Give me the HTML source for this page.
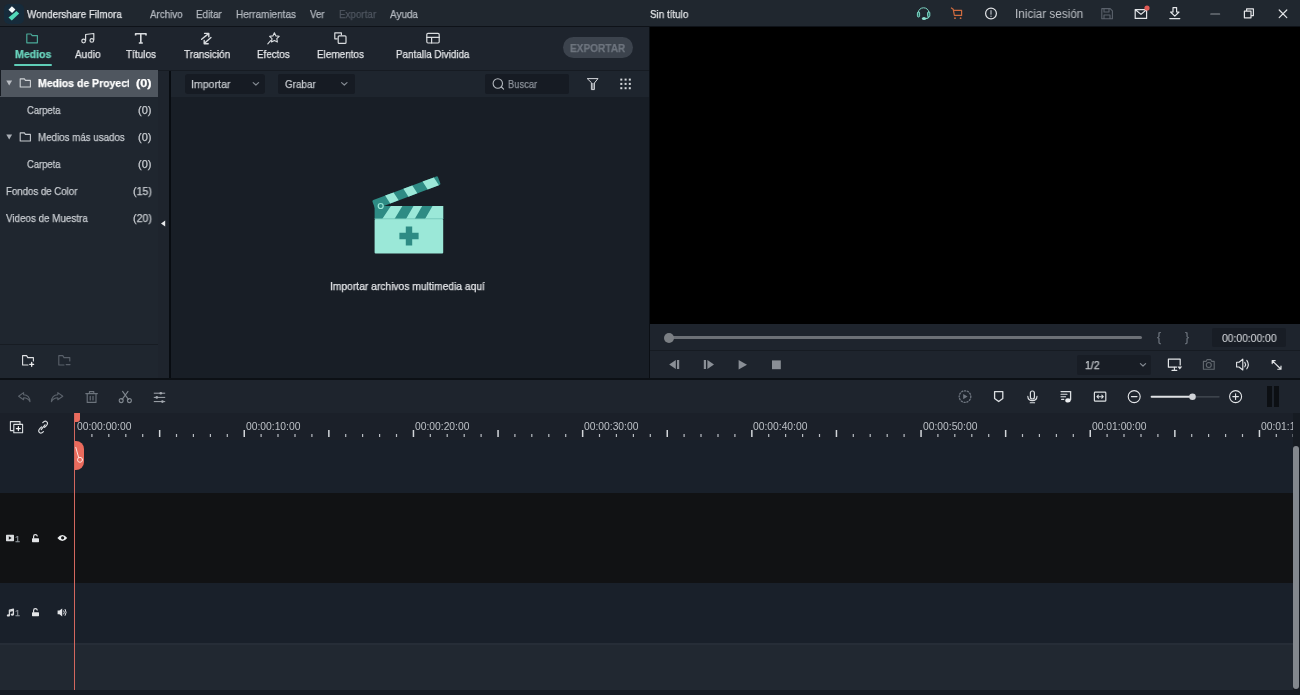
<!DOCTYPE html>
<html lang="es">
<head>
<meta charset="utf-8">
<title>Wondershare Filmora</title>
<style>
*{box-sizing:border-box;margin:0;padding:0}
html,body{width:1300px;height:695px;overflow:hidden;background:#1e242d}
body{position:relative;font-family:"Liberation Sans",sans-serif;font-size:11px;color:#d6d9dd;}
.a{position:absolute}
.t{position:absolute;white-space:nowrap;will-change:transform;-webkit-text-stroke:0.25px currentColor;line-height:14px;height:14px;margin-top:-7px}
svg{position:absolute;overflow:visible}
.rl{color:#bcc0c6;-webkit-text-stroke:0;font-size:10.3px}
.ic{fill:none;stroke:#d9dcdf;stroke-width:1.2;stroke-linecap:round;stroke-linejoin:round}
</style>
<style id="fit">
.t{transform-origin:0 50%}
#t-app{left:27.3px!important;transform:scaleX(0.898)}
#m1{left:149.5px!important;transform:scaleX(0.892)}
#m2{left:196.0px!important;transform:scaleX(0.897)}
#m3{left:236.0px!important;transform:scaleX(0.909)}
#m4{left:310.0px!important;transform:scaleX(0.882)}
#m5{left:338.5px!important;transform:scaleX(0.893)}
#m6{left:390.0px!important;transform:scaleX(0.903)}
#t-doc{left:650.0px!important;transform:scaleX(0.895)}
#tb1{left:14.5px!important;transform:scaleX(0.961)}
#tb2{left:74.5px!important;transform:scaleX(0.911)}
#tb3{left:126.0px!important;transform:scaleX(0.909)}
#tb4{left:183.5px!important;transform:scaleX(0.920)}
#tb5{left:257.0px!important;transform:scaleX(0.892)}
#tb6{left:317.0px!important;transform:scaleX(0.904)}
#tb7{left:395.5px!important;transform:scaleX(0.896)}
#s1n{left:136.0px!important;transform:scaleX(1.154)}
#s2{left:27.0px!important;transform:scaleX(0.855)}
#s2n{left:138.0px!important;transform:scaleX(1.000)}
#s3{left:38.3px!important;transform:scaleX(0.887)}
#s3n{left:138.0px!important;transform:scaleX(1.000)}
#s4{left:27.0px!important;transform:scaleX(0.855)}
#s4n{left:138.0px!important;transform:scaleX(1.000)}
#s5{left:6.0px!important;transform:scaleX(0.878)}
#s5n{left:132.7px!important;transform:scaleX(0.963)}
#s6{left:6.0px!important;transform:scaleX(0.893)}
#s6n{left:132.7px!important;transform:scaleX(0.963)}
#d1{left:191.0px!important;transform:scaleX(0.963)}
#d2{left:285.0px!important;transform:scaleX(0.897)}
#d3{left:508.0px!important;transform:scaleX(0.853)}
#t-imp{left:330.1px!important;transform:scaleX(0.935)}
#tc{left:1221.8px!important;transform:scaleX(0.940)}
#half{left:1084.7px!important;transform:scaleX(0.953)}
</style>
</head>
<body>
<!-- ===== base panels ===== -->
<div class="a" style="left:0;top:0;width:1300px;height:26px;background:#20272f"></div>
<div class="a" style="left:0;top:25.8px;width:1300px;height:1.6px;background:#0e1218"></div>
<div class="a" style="left:0;top:28px;width:650px;height:42px;background:#1e242d"></div>
<div class="a" style="left:0;top:70px;width:650px;height:1px;background:#161b22"></div>
<!-- sidebar -->
<div class="a" style="left:0;top:71px;width:158px;height:307px;background:#1f262f"></div>
<div class="a" style="left:158px;top:71px;width:11px;height:307px;background:#1e242d"></div>
<div class="a" style="left:169px;top:71px;width:2px;height:307px;background:#080c11"></div>
<!-- media panel -->
<div class="a" style="left:171px;top:71px;width:478px;height:26px;background:#1e252e"></div>
<div class="a" style="left:171px;top:97px;width:478px;height:281px;background:#181e26"></div>
<div class="a" style="left:649px;top:27px;width:1px;height:351px;background:#0b0f14"></div>
<!-- preview -->
<div class="a" style="left:649.6px;top:26.6px;width:650.4px;height:297px;background:#000"></div>
<div class="a" style="left:650px;top:324px;width:650px;height:54px;background:#1e242d"></div>
<div class="a" style="left:650px;top:350px;width:650px;height:1px;background:#161b22"></div>
<!-- split line -->
<div class="a" style="left:0;top:378px;width:1300px;height:2px;background:#0c1015"></div>
<!-- timeline -->
<div class="a" style="left:0;top:380px;width:1300px;height:33px;background:#1e242d"></div>
<div class="a" style="left:0;top:413px;width:1300px;height:27px;background:#1b2029"></div>
<div class="a" style="left:0;top:440px;width:1300px;height:53px;background:#19202a"></div>
<div class="a" style="left:0;top:493px;width:1300px;height:90px;background:#111214"></div>
<div class="a" style="left:0;top:583px;width:1300px;height:60px;background:#19202a"></div>
<div class="a" style="left:0;top:643px;width:1300px;height:47px;background:#212831"></div>
<div class="a" style="left:0;top:643px;width:1293px;height:2px;background:#262d37"></div>
<div class="a" style="left:0;top:690px;width:1300px;height:5px;background:#161b23"></div>

<!-- ===== title bar ===== -->
<div id="sec-title">
<div class="a" style="left:4px;top:3.5px;width:20px;height:20px;border-radius:5px;background:#162b3b"></div>
<svg style="left:0;top:0" width="28" height="28" viewBox="0 0 28 28"><path d="M11.9 6.3 L15.4 9.5 L12.1 13.1 L8.5 9.7 Z" fill="#f6fbfb"/><path d="M16.5 10.9 L19.2 13.6 L11.8 20.6 L8.5 17.5 Z" fill="#52d8b8"/></svg>
<span class="t" id="t-app" style="left:27px;top:13.5px;color:#e4e6e9">Wondershare Filmora</span>
<span class="t" id="m1" style="left:149px;top:13.5px;color:#b4b9c0">Archivo</span>
<span class="t" id="m2" style="left:196px;top:13.5px;color:#b4b9c0">Editar</span>
<span class="t" id="m3" style="left:236px;top:13.5px;color:#b4b9c0">Herramientas</span>
<span class="t" id="m4" style="left:310px;top:13.5px;color:#b4b9c0">Ver</span>
<span class="t" id="m5" style="left:338px;top:13.5px;color:#4f5660">Exportar</span>
<span class="t" id="m6" style="left:390px;top:13.5px;color:#b4b9c0">Ayuda</span>
<span class="t" id="t-doc" style="left:650px;top:13.5px;color:#e4e6e9">Sin título</span>
<span class="t" id="t-login" style="left:1015.2px;top:13.8px;color:#bcc0c6;font-size:12px;-webkit-text-stroke:0;transform:scaleX(.975)">Iniciar sesión</span>
</div>

<!-- ===== tabs ===== -->
<div id="sec-tabs">
<span class="t" id="tb1" style="left:14px;top:54px;color:#69d3bd;font-weight:bold">Medios</span>
<div class="a" style="left:14px;top:64px;width:38px;height:2px;background:#5fcdb8;border-radius:1px"></div>
<span class="t" id="tb2" style="left:74px;top:54px;color:#e4e6e9">Audio</span>
<span class="t" id="tb3" style="left:126px;top:54px;color:#e4e6e9">Títulos</span>
<span class="t" id="tb4" style="left:183px;top:54px;color:#e4e6e9">Transición</span>
<span class="t" id="tb5" style="left:257px;top:54px;color:#e4e6e9">Efectos</span>
<span class="t" id="tb6" style="left:317px;top:54px;color:#e4e6e9">Elementos</span>
<span class="t" id="tb7" style="left:395px;top:54px;color:#e4e6e9">Pantalla Dividida</span>
<div class="a" style="left:563px;top:37px;width:70px;height:21px;border-radius:11px;background:#3c434d"></div>
<span class="t" id="t-exp" style="left:570.4px;top:47.5px;color:#6d747e;font-weight:bold;font-size:11px;transform:scaleX(.917)">EXPORTAR</span>
</div>

<!-- ===== sidebar ===== -->
<div id="sec-side">
<div class="a" style="left:0;top:70px;width:158px;height:26.5px;background:#4f565f"></div><div class="a" style="left:0;top:70px;width:1px;height:26px;background:#161b22"></div>
<div class="a" style="left:38px;top:75px;width:91px;height:16px;overflow:hidden"><span class="t" id="s1" style="left:0;top:8px;color:#fff;font-weight:bold;transform:scaleX(.951)">Medios de Proyecto</span></div>
<span class="t" id="s1n" style="left:135px;top:83px;color:#fff;font-weight:bold">(0)</span>
<span class="t" id="s2" style="left:27px;top:110px;color:#c9cdd2">Carpeta</span>
<span class="t" id="s2n" style="left:138px;top:110px;color:#c9cdd2">(0)</span>
<span class="t" id="s3" style="left:38px;top:137px;color:#c9cdd2">Medios más usados</span>
<span class="t" id="s3n" style="left:138px;top:137px;color:#c9cdd2">(0)</span>
<span class="t" id="s4" style="left:27px;top:164px;color:#c9cdd2">Carpeta</span>
<span class="t" id="s4n" style="left:138px;top:164px;color:#c9cdd2">(0)</span>
<span class="t" id="s5" style="left:6px;top:191px;color:#c9cdd2">Fondos de Color</span>
<span class="t" id="s5n" style="left:132px;top:191px;color:#c9cdd2">(15)</span>
<span class="t" id="s6" style="left:6px;top:218px;color:#c9cdd2">Videos de Muestra</span>
<span class="t" id="s6n" style="left:132px;top:218px;color:#c9cdd2">(20)</span>
<div class="a" style="left:0;top:344px;width:158px;height:1px;background:#171c23"></div>
</div>

<!-- ===== media toolbar ===== -->
<div id="sec-media">
<div class="a" style="left:185px;top:74px;width:80px;height:20px;background:#161b23;border-radius:3px"></div>
<span class="t" id="d1" style="left:191px;top:84px;color:#c3c7cc">Importar</span>
<div class="a" style="left:278px;top:74px;width:77px;height:20px;background:#161b23;border-radius:2px"></div>
<span class="t" id="d2" style="left:285px;top:84px;color:#c3c7cc">Grabar</span>
<div class="a" style="left:485px;top:74px;width:84px;height:20px;background:#161b23;border-radius:2px"></div>
<span class="t" id="d3" style="left:508px;top:84px;color:#8b9199">Buscar</span>
<span class="t" id="t-imp" style="left:331px;top:286px;color:#e4e6e9">Importar archivos multimedia aquí</span>
</div>

<!-- ===== preview controls ===== -->
<div id="sec-prev">
<div class="a" style="left:669px;top:336px;width:473px;height:3px;background:#6c7076;border-radius:1.5px"></div>
<div class="a" style="left:664px;top:333px;width:10px;height:10px;background:#7b7f84;border-radius:5px"></div>
<span class="t" id="br1" style="left:1157px;top:337px;color:#6b727b;font-size:12px">{</span>
<span class="t" id="br2" style="left:1185.3px;top:337px;color:#6b727b;font-size:12px">}</span>
<div class="a" style="left:1212px;top:328px;width:74px;height:19px;background:#181d25;border-radius:2px"></div>
<span class="t" id="tc" style="left:1221px;top:338px;color:#d3d6da;-webkit-text-stroke:0.1px">00:00:00:00</span>
<div class="a" style="left:1077px;top:355px;width:74px;height:20px;background:#181d25;border-radius:2px"></div>
<span class="t" id="half" style="left:1085px;top:365px;color:#c3c7cc">1/2</span>
</div>

<!-- ===== timeline ===== -->
<div id="sec-tl">
<div id="ruler" class="a" style="left:0;top:0;width:1293px;height:445px;overflow:hidden"><svg style="left:0;top:413px" width="1293" height="27" viewBox="0 0 1293 27"><rect x="91.3" y="21" width="1.2" height="3" fill="#b9bdc3"/><rect x="108.2" y="21" width="1.2" height="3" fill="#b9bdc3"/><rect x="125.2" y="21" width="1.2" height="3" fill="#b9bdc3"/><rect x="142.1" y="21" width="1.2" height="3" fill="#b9bdc3"/><rect x="158.9" y="17" width="1.5" height="7" fill="#d3d6da"/><rect x="175.9" y="21" width="1.2" height="3" fill="#b9bdc3"/><rect x="192.8" y="21" width="1.2" height="3" fill="#b9bdc3"/><rect x="209.8" y="21" width="1.2" height="3" fill="#b9bdc3"/><rect x="226.7" y="21" width="1.2" height="3" fill="#b9bdc3"/><rect x="243.5" y="17" width="1.5" height="7" fill="#d3d6da"/><rect x="260.5" y="21" width="1.2" height="3" fill="#b9bdc3"/><rect x="277.4" y="21" width="1.2" height="3" fill="#b9bdc3"/><rect x="294.4" y="21" width="1.2" height="3" fill="#b9bdc3"/><rect x="311.3" y="21" width="1.2" height="3" fill="#b9bdc3"/><rect x="328.1" y="17" width="1.5" height="7" fill="#d3d6da"/><rect x="345.1" y="21" width="1.2" height="3" fill="#b9bdc3"/><rect x="362.0" y="21" width="1.2" height="3" fill="#b9bdc3"/><rect x="379.0" y="21" width="1.2" height="3" fill="#b9bdc3"/><rect x="395.9" y="21" width="1.2" height="3" fill="#b9bdc3"/><rect x="412.7" y="17" width="1.5" height="7" fill="#d3d6da"/><rect x="429.7" y="21" width="1.2" height="3" fill="#b9bdc3"/><rect x="446.6" y="21" width="1.2" height="3" fill="#b9bdc3"/><rect x="463.6" y="21" width="1.2" height="3" fill="#b9bdc3"/><rect x="480.5" y="21" width="1.2" height="3" fill="#b9bdc3"/><rect x="497.3" y="17" width="1.5" height="7" fill="#d3d6da"/><rect x="514.3" y="21" width="1.2" height="3" fill="#b9bdc3"/><rect x="531.2" y="21" width="1.2" height="3" fill="#b9bdc3"/><rect x="548.2" y="21" width="1.2" height="3" fill="#b9bdc3"/><rect x="565.1" y="21" width="1.2" height="3" fill="#b9bdc3"/><rect x="581.9" y="17" width="1.5" height="7" fill="#d3d6da"/><rect x="598.9" y="21" width="1.2" height="3" fill="#b9bdc3"/><rect x="615.8" y="21" width="1.2" height="3" fill="#b9bdc3"/><rect x="632.8" y="21" width="1.2" height="3" fill="#b9bdc3"/><rect x="649.7" y="21" width="1.2" height="3" fill="#b9bdc3"/><rect x="666.5" y="17" width="1.5" height="7" fill="#d3d6da"/><rect x="683.5" y="21" width="1.2" height="3" fill="#b9bdc3"/><rect x="700.4" y="21" width="1.2" height="3" fill="#b9bdc3"/><rect x="717.4" y="21" width="1.2" height="3" fill="#b9bdc3"/><rect x="734.3" y="21" width="1.2" height="3" fill="#b9bdc3"/><rect x="751.1" y="17" width="1.5" height="7" fill="#d3d6da"/><rect x="768.1" y="21" width="1.2" height="3" fill="#b9bdc3"/><rect x="785.0" y="21" width="1.2" height="3" fill="#b9bdc3"/><rect x="802.0" y="21" width="1.2" height="3" fill="#b9bdc3"/><rect x="818.9" y="21" width="1.2" height="3" fill="#b9bdc3"/><rect x="835.7" y="17" width="1.5" height="7" fill="#d3d6da"/><rect x="852.7" y="21" width="1.2" height="3" fill="#b9bdc3"/><rect x="869.6" y="21" width="1.2" height="3" fill="#b9bdc3"/><rect x="886.6" y="21" width="1.2" height="3" fill="#b9bdc3"/><rect x="903.5" y="21" width="1.2" height="3" fill="#b9bdc3"/><rect x="920.3" y="17" width="1.5" height="7" fill="#d3d6da"/><rect x="937.3" y="21" width="1.2" height="3" fill="#b9bdc3"/><rect x="954.2" y="21" width="1.2" height="3" fill="#b9bdc3"/><rect x="971.2" y="21" width="1.2" height="3" fill="#b9bdc3"/><rect x="988.1" y="21" width="1.2" height="3" fill="#b9bdc3"/><rect x="1004.9" y="17" width="1.5" height="7" fill="#d3d6da"/><rect x="1021.9" y="21" width="1.2" height="3" fill="#b9bdc3"/><rect x="1038.8" y="21" width="1.2" height="3" fill="#b9bdc3"/><rect x="1055.8" y="21" width="1.2" height="3" fill="#b9bdc3"/><rect x="1072.7" y="21" width="1.2" height="3" fill="#b9bdc3"/><rect x="1089.5" y="17" width="1.5" height="7" fill="#d3d6da"/><rect x="1106.5" y="21" width="1.2" height="3" fill="#b9bdc3"/><rect x="1123.4" y="21" width="1.2" height="3" fill="#b9bdc3"/><rect x="1140.4" y="21" width="1.2" height="3" fill="#b9bdc3"/><rect x="1157.3" y="21" width="1.2" height="3" fill="#b9bdc3"/><rect x="1174.1" y="17" width="1.5" height="7" fill="#d3d6da"/><rect x="1191.1" y="21" width="1.2" height="3" fill="#b9bdc3"/><rect x="1208.0" y="21" width="1.2" height="3" fill="#b9bdc3"/><rect x="1225.0" y="21" width="1.2" height="3" fill="#b9bdc3"/><rect x="1241.9" y="21" width="1.2" height="3" fill="#b9bdc3"/><rect x="1258.7" y="17" width="1.5" height="7" fill="#d3d6da"/><rect x="1275.7" y="21" width="1.2" height="3" fill="#b9bdc3"/><rect x="1292.6" y="21" width="1.2" height="3" fill="#b9bdc3"/></svg><span class="t rl" style="left:76.5px;top:426.5px">00:00:00:00</span><span class="t rl" style="left:245.7px;top:426.5px">00:00:10:00</span><span class="t rl" style="left:414.9px;top:426.5px">00:00:20:00</span><span class="t rl" style="left:584.1px;top:426.5px">00:00:30:00</span><span class="t rl" style="left:753.3px;top:426.5px">00:00:40:00</span><span class="t rl" style="left:922.5px;top:426.5px">00:00:50:00</span><span class="t rl" style="left:1091.7px;top:426.5px">00:01:00:00</span><span class="t rl" style="left:1260.9px;top:426.5px">00:01:10:00</span></div>
<div class="a" style="left:1293px;top:413px;width:7px;height:282px;background:#161b22"></div>
<div class="a" style="left:1293px;top:446px;width:5.5px;height:243px;background:#83888e;border-radius:3px"></div>
<div class="a" style="left:74px;top:413px;width:6px;height:9px;background:#ea6b5d;border-radius:0 0 3px 0"></div>
<div class="a" style="left:74px;top:441px;width:10px;height:29px;background:#ea6b5d;border-radius:0 8px 8px 0"></div>
<div class="a" style="left:73.8px;top:413px;width:1.3px;height:277px;background:#d2675e"></div>
<div class="a" style="left:1267px;top:386px;width:5px;height:21px;background:#0c0f13"></div>
<div class="a" style="left:1274px;top:386px;width:5px;height:21px;background:#0c0f13"></div>
<span class="t" id="v1" style="left:15px;top:538.5px;color:#8e949b;font-size:9px">1</span>
<span class="t" id="a1" style="left:15px;top:612.5px;color:#8e949b;font-size:9px">1</span>
</div>

<!--ICONS-->
<svg id="icons" style="left:0;top:0" width="1300" height="695" viewBox="0 0 1300 695">
<!-- title bar icons -->
<g id="i-title" fill="none" stroke-linecap="round" stroke-linejoin="round">
<path d="M918.4 12 A5.2 4.2 0 0 1 928.8 12" stroke="#7fd8c6" stroke-width="1"/>
<rect x="917.4" y="11.8" width="2.2" height="5.2" rx="1.1" stroke="#7fd8c6" stroke-width="1" fill="#2a6e66"/><rect x="927.6" y="11.8" width="2.2" height="5.2" rx="1.1" stroke="#7fd8c6" stroke-width="1" fill="#2a6e66"/>
<path d="M928.6 17.2 Q928 18.6 925.6 18.6" stroke="#7fd8c6" stroke-width="1.1"/><ellipse cx="924" cy="18.5" rx="2.1" ry="1.5" fill="#8ee0d0"/>
<path d="M951.4 8 L953.2 9.2 L954.4 15.4 H961.6 V10.4 H953.6" stroke="#cf6b3f" stroke-width="1.2"/>
<circle cx="955" cy="18.2" r="0.9" fill="#cf6b3f"/><circle cx="960.6" cy="18.2" r="0.9" fill="#cf6b3f"/>
<circle cx="991" cy="13.5" r="5.4" stroke="#e3e5e8" stroke-width="1.2"/><path d="M991 10.6 V14.2 M991 16.2 V16.4" stroke="#a9aeb5" stroke-width="1.3"/>
<path d="M1101.8 8.6 H1110.2 L1112.4 10.8 V18.8 H1101.8 Z M1104 8.8 V12 H1109 V8.8 M1104 18.6 V15 H1110 V18.6" stroke="#5b626c" stroke-width="1.1"/>
<path d="M1135.2 9.6 H1146.6 V18.4 H1135.2 Z M1135.4 9.8 L1141 14.4 L1146.4 9.8" stroke="#e3e5e8" stroke-width="1.2"/>
<circle cx="1147" cy="8" r="2.6" fill="#e05a55"/>
<path d="M1173 7.6 H1176.6 V12 H1179 L1174.8 16.2 L1170.6 12 H1173 Z M1169.8 18.6 H1179.8" stroke="#e3e5e8" stroke-width="1.2"/>
<path d="M1210.8 14 H1219.6" stroke="#8d939a" stroke-width="1.2"/>
<path d="M1244.4 11.2 H1251 V17.8 H1244.4 Z M1246.6 11 V8.8 H1253.4 V15.6 H1251.2" stroke="#e3e5e8" stroke-width="1.2"/>
<path d="M1279.2 10 L1286.8 17.6 M1286.8 10 L1279.2 17.6" stroke="#e3e5e8" stroke-width="1.2"/>
</g>
<!-- tab icons -->
<g class="ic" id="i-tabs">
<path d="M26.8 34 H31 L32.2 35.6 H37.4 V42.8 H26.8 Z" stroke="#4aa898"/>
<g id="i-audio"><path d="M85.6 40.4 V34.5 L93.8 33.5 V39.8"/><circle cx="83.6" cy="41" r="1.8"/><circle cx="91.8" cy="40.4" r="1.8"/></g>
<path d="M135.6 35.6 V33.8 H146 V35.6 M140.8 33.8 V42.8 M138.8 43 H142.8" stroke-width="1.6" stroke-linecap="butt"/>
<path d="M201.6 39.2 L208.6 33.6 M204.6 33.4 H208.8 V36.8 M211 37.6 L204.2 43.6 M208.2 43.8 H204.2 V40.4" stroke-width="1.4"/>
<path d="M274.4 32.8 L275.9 35.9 L279.2 36.3 L276.8 38.6 L277.4 42 L274.4 40.4 L271.4 42 L272 38.6 L269.6 36.3 L272.9 35.9 Z M270.6 40.6 L267.8 43.8" stroke-width="1.1"/>
<path d="M334.8 32.8 H341.4 V34.8 M334.8 32.8 V38.8 H337.2"/><rect x="338.2" y="35.8" width="7.8" height="7.6" rx="1"/>
<rect x="426.8" y="33.4" width="12.4" height="9.6" rx="1.2"/><path d="M426.8 37.4 H439.2 M431.6 37.4 V43"/>
</g>
<!-- sidebar icons -->
<g id="i-side" fill="none" stroke-linejoin="round" stroke-linecap="round">
<path d="M6.3 80.6 H12.1 L9.2 85.4 Z" fill="#b9bdc3"/>
<path d="M20.2 78.9 H24.4 L25.4 80.4 H30.4 V87 H20.2 Z" stroke="#d0d3d7" stroke-width="1.1"/>
<path d="M6.3 134.6 H12.1 L9.2 139.4 Z" fill="#a9aeb5"/>
<path d="M20.2 132.9 H24.4 L25.4 134.4 H30.4 V141 H20.2 Z" stroke="#c5c9ce" stroke-width="1.1"/>
<path d="M165.2 220.4 V226.4 L161 223.4 Z" fill="#e8eaec"/>
<path d="M28 365 H22.6 V355.6 H26.6 L27.8 357.6 H33.4 V361" stroke="#dfe1e4" stroke-width="1.1"/>
<path d="M29.8 364.4 H33.6 M31.7 362.5 V366.3" stroke="#f0f1f2" stroke-width="1.3"/>
<path d="M64 365 H58.8 V355.6 H62.8 L64 357.6 H69.8 V361" stroke="#59606a" stroke-width="1.1"/>
<path d="M66.2 364.6 H70" stroke="#59606a" stroke-width="1.2"/>
</g>
<!-- media toolbar icons -->
<g id="i-media" fill="none" stroke-linecap="round" stroke-linejoin="round">
<path d="M253.2 82.6 L255.9 85 L258.6 82.6" stroke="#848a92" stroke-width="1.2"/>
<path d="M341.6 82.6 L344.3 85 L347 82.6" stroke="#848a92" stroke-width="1.2"/>
<circle cx="497.8" cy="83.5" r="4.7" stroke="#b4b9bf" stroke-width="1.1"/><path d="M501.4 87 L503.6 89.2" stroke="#b4b9bf" stroke-width="1.1"/>
<path d="M587.6 78.6 H598 L594.4 83 V89.6 H591.4 V83 Z M592.9 83.4 V89.2" stroke="#d3d6da" stroke-width="1"/>
<g fill="#d3d6da"><rect x="620.3" y="78.6" width="2" height="2"/><rect x="624.6" y="78.6" width="2" height="2"/><rect x="628.8" y="78.6" width="2" height="2"/><rect x="620.3" y="82.9" width="2" height="2"/><rect x="624.6" y="82.9" width="2" height="2"/><rect x="628.8" y="82.9" width="2" height="2"/><rect x="620.3" y="87.2" width="2" height="2"/><rect x="624.6" y="87.2" width="2" height="2"/><rect x="628.8" y="87.2" width="2" height="2"/></g>
</g>
<!-- clapper -->
<g id="i-clap">
<rect x="374.6" y="206" width="68.6" height="13" fill="#2e8b84"/>
<path d="M382.2 219 L390.9 206 H402.4 L394.5 219 Z M406 219 L413.5 206 H422.2 L414.7 219 Z M425 219 L432.5 206 H443.2 V219 Z" fill="#9be8d8"/>
<rect x="374.6" y="219" width="68.6" height="34.6" rx="1" fill="#9be8d8"/>
<rect x="374.6" y="218.4" width="68.6" height="0.8" fill="#6fc4b6"/>
<path d="M399.4 232.8 H405.8 V226.4 H412.2 V232.8 H418.6 V239.2 H412.2 V245.6 H405.8 V239.2 H399.4 Z" fill="#2e8b84"/>
<g transform="translate(372 200.5) rotate(-20.5)">
<rect x="0" y="0" width="70" height="9.2" rx="1.4" fill="#2e8b84"/>
<path d="M14 0 H23 L25 9.2 H16 Z M33.5 0 H43 L45 9.2 H35.5 Z M54 0 H66 L68 9.2 H56 Z" fill="#9be8d8"/>
</g>
<circle cx="380.7" cy="206" r="2.5" fill="#2e8b84" stroke="#9be8d8" stroke-width="1.2"/>
</g>
<!-- preview controls icons -->
<g id="i-prev" fill="none" stroke-linecap="round" stroke-linejoin="round">
<path d="M669.2 364.5 L675.8 360 V369 Z" fill="#8a8f96"/><rect x="677" y="360" width="2.2" height="9" fill="#8a8f96"/>
<rect x="703.8" y="360" width="2.2" height="9" fill="#8a8f96"/><path d="M714 364.5 L707.4 360 V369 Z" fill="#8a8f96"/>
<path d="M747 364.7 L738.6 360 V369.4 Z" fill="#8a8f96"/>
<rect x="772" y="360.4" width="8.8" height="8.8" fill="#8a8f96"/>
<path d="M1140.4 363.6 L1143 366 L1145.600 363.6" stroke="#848a92" stroke-width="1.2"/>
<path d="M1176.600 367.2 H1168.400 V359.200 H1180.200 V365" stroke="#e3e5e8" stroke-width="1.200"/><path d="M1174.400 367.400 V370 M1172 370.400 H1176.800" stroke="#e3e5e8" stroke-width="1.1"/><path d="M1177.400 366.400 H1182.200 L1179.800 369.600 Z" fill="#e3e5e8"/>
<path d="M1203.400 361.400 H1206.200 L1207 359.600 H1210.800 L1211.600 361.400 H1214.200 V369.200 H1203.400 Z" stroke="#62686f" stroke-width="1.1"/><circle cx="1208.800" cy="365" r="2.500" stroke="#62686f" stroke-width="1.1"/>
<path d="M1236.600 362.200 H1239 L1242.800 359.200 V370 L1239 367 H1236.600 Z" stroke="#e3e5e8" stroke-width="1.100"/><path d="M1244.800 362.400 Q1246.400 364.600 1244.800 366.800 M1246.800 360.400 Q1249.800 364.600 1246.800 368.800" stroke="#e3e5e8" stroke-width="1.100"/>
<path d="M1272.4 360.8 L1280.800 369 M1272.2 363.6 V360.600 H1275.2 M1281 366 V369.200 H1277.800" stroke="#e3e5e8" stroke-width="1.15"/>
</g>
<!-- timeline toolbar icons -->
<g id="i-tl" fill="none" stroke-linecap="round" stroke-linejoin="round">
<path d="M18.600 396.200 L23.600 392.600 V394.800 Q29.600 395.200 30 401.600 Q27.800 397.800 23.600 397.800 V399.800 Z" stroke="#5b626b" stroke-width="1.100"/>
<path d="M62.800 396.200 L57.800 392.600 V394.800 Q51.800 395.200 51.400 401.600 Q53.600 397.800 57.800 397.800 V399.800 Z" stroke="#5b626b" stroke-width="1.100"/>
<path d="M85.800 393.600 H97.400 M89.400 393.400 V391.600 H93.800 V393.400 M87.200 393.800 V402.400 H96 V393.800 M90.200 396.200 V400 M93 396.200 V400" stroke="#6c737c" stroke-width="1.100"/>
<path d="M122.600 391.400 L128.600 399.600 M128 391.400 L122 399.600" stroke="#7f868e" stroke-width="1.100"/><circle cx="121.200" cy="400.600" r="2" stroke="#7f868e" stroke-width="1.100"/><circle cx="129.400" cy="400.600" r="2" stroke="#7f868e" stroke-width="1.100"/>
<path d="M154.200 393.200 H164.800 M154.200 397.400 H164.800 M154.200 401.600 H164.800" stroke="#a4a9b0" stroke-width="1"/><circle cx="160.800" cy="393.200" r="1.300" fill="#a4a9b0"/><circle cx="156.800" cy="397.400" r="1.300" fill="#a4a9b0"/><circle cx="162.400" cy="401.600" r="1.300" fill="#a4a9b0"/>
<!-- right side -->
<circle cx="965" cy="396.600" r="5.800" stroke="#6f7680" stroke-width="1.300" stroke-dasharray="1.200 1.700"/><path d="M963.200 394 L967.600 396.600 L963.200 399.200 Z" fill="#6f7680"/>
<path d="M994.600 391.600 H1002.800 V398.400 L998.700 401.600 L994.600 398.400 Z" stroke="#dcdfe2" stroke-width="1.300"/>
<rect x="1030.400" y="391" width="4" height="8" rx="2" stroke="#dcdfe2" stroke-width="1.200"/><path d="M1027.800 396.400 Q1028 400.600 1032.400 400.600 Q1036.800 400.600 1037 396.400 M1030.200 402.800 H1034.600" stroke="#dcdfe2" stroke-width="1.100"/>
<path d="M1061 391.600 H1070 M1061 394.200 H1067 M1061 396.800 H1065.600 M1061.600 399.400 H1063.800" stroke="#dcdfe2" stroke-width="1.100"/><path d="M1070.600 391.600 V399.600" stroke="#dcdfe2" stroke-width="1.300"/><ellipse cx="1068" cy="400.400" rx="2.700" ry="2.100" fill="#eceef0"/>
<rect x="1094.400" y="392.200" width="11.400" height="9" rx="0.800" stroke="#dcdfe2" stroke-width="1.200"/><path d="M1097 396.700 H1103.200 M1098.400 395.200 L1096.900 396.700 L1098.400 398.200 M1101.800 395.200 L1103.300 396.700 L1101.800 398.200" stroke="#dcdfe2" stroke-width="1.100"/>
<circle cx="1134.200" cy="396.600" r="6" stroke="#e3e5e8" stroke-width="1.100"/><path d="M1131.400 396.600 H1137" stroke="#e3e5e8" stroke-width="1.100"/>
<path d="M1151.600 396.800 H1192" stroke="#dfe1e4" stroke-width="2"/><path d="M1192 396.800 H1219" stroke="#474d56" stroke-width="1.300"/><circle cx="1192.500" cy="396.800" r="3.300" fill="#d0d3d7"/>
<circle cx="1235.600" cy="396.600" r="6" stroke="#e3e5e8" stroke-width="1.100"/><path d="M1232.800 396.600 H1238.400 M1235.600 393.800 V399.400" stroke="#e3e5e8" stroke-width="1.100"/>
<!-- track header row -->
<path d="M20 424 V421.600 H10.400 V430.600 H13.400" stroke="#dcdfe2" stroke-width="1.100"/><rect x="13.800" y="424.400" width="8.800" height="8.400" stroke="#dcdfe2" stroke-width="1.100"/><path d="M16.400 428.600 H20.400 M18.400 426.600 V430.600" stroke="#f0f1f2" stroke-width="1.200"/>
<path d="M41.600 426.800 L40 428.400 Q37.600 431 39.600 432.600 Q41.200 434 43.400 431.600 M44.600 427.400 L46.200 425.800 Q48.600 423.200 46.600 421.600 Q45 420.200 42.800 422.600 M41.200 429.600 L45 424.800" stroke="#dcdfe2" stroke-width="1.200"/>
<!-- scissor glyph on playhead -->
<path d="M75.800 447.400 L78.6 457.4" stroke="#fbe4e0" stroke-width="1"/><circle cx="80" cy="459.800" r="2.500" stroke="#fbe4e0" stroke-width="1"/>
<!-- track icons -->
<rect x="6" y="534.800" width="8" height="6.400" rx="0.600" fill="#dadcdf"/><path d="M8.800 536.200 L11.600 538 L8.800 539.800 Z" fill="#111214"/>
<path d="M33.600 538.200 V536.400 Q33.600 534.600 35.400 534.600 Q37 534.600 37.200 536" stroke="#e3e5e8" stroke-width="1.200"/><rect x="32" y="538.200" width="7" height="4" rx="0.600" fill="#e3e5e8"/>
<path d="M57.400 538 Q62.300 531.800 67.200 538 Q62.300 544.200 57.400 538 Z" fill="#eceef0"/><circle cx="62.600" cy="537.800" r="1.600" fill="#111214"/>
<path d="M9.400 615.200 V610.200 L13.400 609.200 V614.200" stroke="#dadcdf" stroke-width="1.300"/><ellipse cx="8.400" cy="615.400" rx="1.500" ry="1.200" fill="#dadcdf"/><ellipse cx="12.400" cy="614.600" rx="1.500" ry="1.200" fill="#dadcdf"/><path d="M9.400 610.400 L13.400 609.400 V611 L9.400 612 Z" fill="#dadcdf"/>
<path d="M33.600 612.200 V610.400 Q33.600 608.600 35.400 608.600 Q37 608.600 37.200 610" stroke="#e3e5e8" stroke-width="1.200"/><rect x="32" y="612.200" width="7" height="4" rx="0.600" fill="#e3e5e8"/>
<path d="M57.600 610.600 H59.400 L62.200 608.400 V616.400 L59.400 614.200 H57.600 Z" fill="#e3e5e8"/><path d="M63.800 610.800 Q65 612.400 63.800 614 M65.200 609.400 Q67.200 612.400 65.200 615.400" stroke="#e3e5e8" stroke-width="1"/>
</g>
</svg>
</body>
</html>
